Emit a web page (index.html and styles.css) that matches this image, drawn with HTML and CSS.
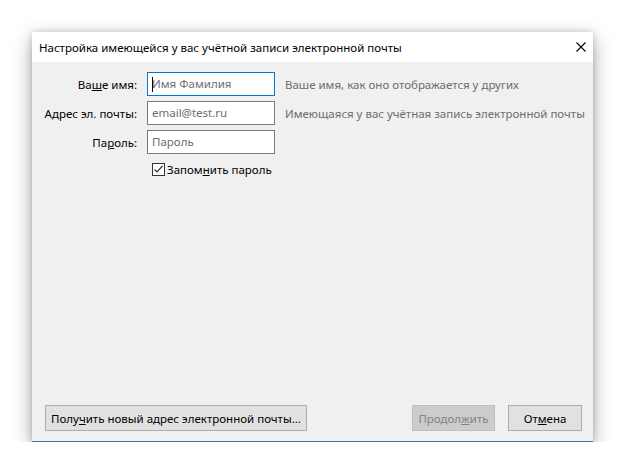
FILE: index.html
```html
<!DOCTYPE html>
<html lang="ru">
<head>
    <meta charset="UTF-8">
    <title>Настройка учётной записи</title>
    <link rel="stylesheet" href="styles.css">
</head>
<body>
    <div class="dialog">
        <div class="titlebar">
            <span class="title">Настройка имеющейся у вас учётной записи электронной почты</span>
            <svg class="close" width="10" height="10" viewBox="0 0 10 10">
                <path d="M0.5 0.5 L9.5 9.5 M9.5 0.5 L0.5 9.5" stroke="#000" stroke-width="1.1"/>
            </svg>
        </div>

        <div class="content">
            <div class="form">
                <label class="label">Ва<u>ш</u>е имя:</label>
                <div class="field focused"><span class="caret"></span>Имя Фамилия</div>
                <span class="help">Ваше имя, как оно отображается у других</span>

                <label class="label">А<u>д</u>рес эл. почты:</label>
                <div class="field">email@test.ru</div>
                <span class="help">Имеющаяся у вас учётная запись электронной почты</span>

                <label class="label">Па<u>р</u>оль:</label>
                <div class="field">Пароль</div>
                <span></span>

                <div class="remember">
                    <svg class="check" width="13" height="13" viewBox="0 0 13 13">
                        <rect x="0.5" y="0.5" width="12" height="12" fill="#fff" stroke="#333"/>
                        <path d="M2.5 6.5 L5 9 L10.5 3" fill="none" stroke="#333" stroke-width="1.2"/>
                    </svg>
                    <span>Запом<u>н</u>ить пароль</span>
                </div>
            </div>

            <div class="footer">
                <button class="btn new">Полу<u>ч</u>ить новый адрес электронной почты...</button>
                <div class="spacer"></div>
                <button class="btn disabled">Продол<u>ж</u>ить</button>
                <button class="btn cancel">От<u>м</u>ена</button>
            </div>
        </div>
    </div>
</body>
</html>
```

FILE: styles.css
```css
body {
    margin: 0;
    background-color: #fff;
    font-family: "Noto Sans", "Open Sans", sans-serif;
    font-size: 11.5px;
    color: #000;
}
.dialog {
    margin: 32px 0 0 32px;
    width: 561px;
    height: 410px;
    display: flex;
    flex-direction: column;
    background-color: #f0f0f0;
    border-bottom: 1px solid #2b79c2;
    box-shadow: 0 6px 18px rgba(0, 0, 0, 0.35), 0 0 6px rgba(0, 0, 0, 0.15);
    box-sizing: border-box;
}
.titlebar {
    height: 30px;
    background-color: #fff;
    display: flex;
    align-items: center;
    padding: 0 7px;
}
.title {
    flex: 1;
}
.content {
    flex: 1;
    display: flex;
    flex-direction: column;
    padding-top: 10px;
}
.form {
    display: grid;
    grid-template-columns: 105px 128px 1fr;
    column-gap: 10px;
    row-gap: 5px;
    align-items: center;
}
.label {
    text-align: right;
    white-space: nowrap;
}
.field {
    height: 24px;
    box-sizing: border-box;
    border: 1px solid #7a7a7a;
    background-color: #fff;
    color: #6d6d6d;
    padding: 0 4px;
    line-height: 22px;
    position: relative;
}
.field.focused {
    border-color: #0078d7;
}
.caret {
    position: absolute;
    left: 4px;
    top: 4px;
    width: 1px;
    height: 15px;
    background-color: #000;
}
.help {
    color: #6d6d6d;
    white-space: nowrap;
}
.remember {
    grid-column: 2 / 4;
    display: flex;
    align-items: center;
    gap: 2px;
    padding-left: 5px;
    margin-top: 3px;
    white-space: nowrap;
}
.footer {
    margin-top: auto;
    display: flex;
    gap: 13px;
    padding: 0 11px 10px 13px;
}
.spacer {
    flex: 1;
}
.btn {
    height: 26px;
    font-family: inherit;
    font-size: 11.5px;
    color: #000;
    background-color: #e1e1e1;
    border: 1px solid #adadad;
    padding: 0 4px;
    white-space: nowrap;
}
.btn.new {
    width: 262px;
}
.btn.disabled {
    width: 83px;
    background-color: #cccccc;
    border-color: #bfbfbf;
    color: #838383;
}
.btn.cancel {
    width: 74px;
}
```
